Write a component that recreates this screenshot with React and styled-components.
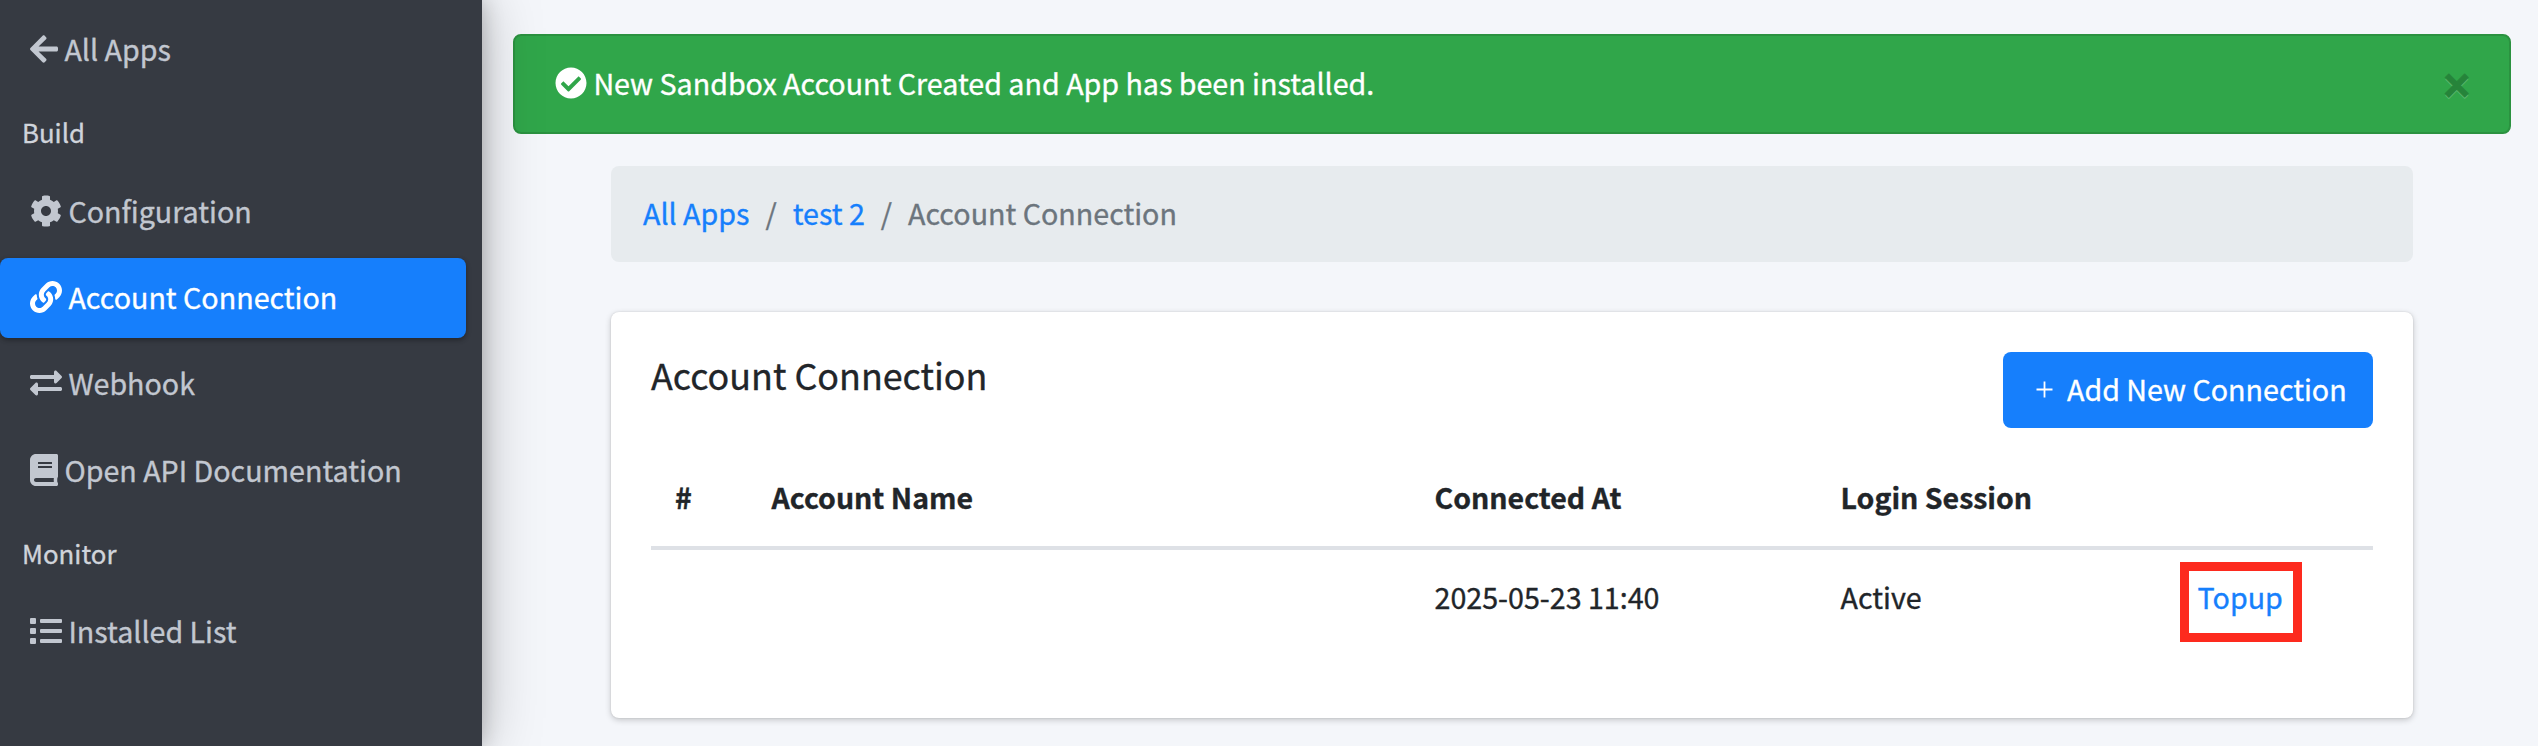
import React from "react";
import styled, { createGlobalStyle, css } from "styled-components";
import {
  FaArrowLeft,
  FaBook,
  FaCheckCircle,
  FaCog,
  FaExchangeAlt,
  FaLink,
  FaList,
} from "react-icons/fa";

const GlobalStyle = createGlobalStyle`
  *, *::before, *::after { box-sizing: border-box; }
  body {
    margin: 0;
    background: #f4f6fa;
    color: #212529;
    font-family: "Noto Sans CJK SC", "Noto Sans", sans-serif;
    font-size: 28.65px;
    line-height: 48px;
    -webkit-text-stroke: 0.35px currentColor;
    overflow: hidden;
  }
`;

const Page = styled.div`
  display: flex;
  height: 746px;
  overflow: hidden;
`;

const Sidebar = styled.aside`
  flex: none;
  width: 482px;
  height: 746px;
  padding: 10px 16px 0 0;
  background: #363a42;
  box-shadow: 0 0 56px rgba(0, 0, 0, 0.25), 0 0 20px rgba(0, 0, 0, 0.22);
  z-index: 1;
`;

const NavLink = styled.a`
  display: flex;
  align-items: center;
  gap: 6.4px;
  height: 80px;
  margin-bottom: 6.4px;
  padding: 0 30px 2px;
  border-radius: 8px;
  color: #c2c7d0;
  white-space: nowrap;
  ${(p) =>
    p.$active &&
    css`
      background: #167ffc;
      color: #fff;
      box-shadow: 0 2px 6px rgba(0, 0, 0, 0.12), 0 2px 4px rgba(0, 0, 0, 0.24);
    `}
  svg {
    flex: none;
    height: 32px;
    width: ${(p) => p.$iconWidth || 32}px;
  }
`;

const NavHeader = styled.div`
  height: 75.2px;
  padding: 13.5px 22px 0;
  color: #d0d4db;
  font-size: 25.8px;
  line-height: 43px;
`;

const Content = styled.main`
  flex: 1;
  min-width: 0;
  padding: 34px 27px 0 31px;
`;

const Alert = styled.div`
  display: flex;
  align-items: center;
  height: 100px;
  padding: 0 40px 2px 40px;
  background: #30a64a;
  border: 2px solid #2b9240;
  border-radius: 8px;
  color: #fff;
  svg {
    width: 32px;
    height: 32px;
    margin-right: 6.4px;
  }
`;

const CloseButton = styled.button`
  margin: 0 -1px 0 auto;
  padding: 3px 0 0;
  border: 0;
  background: none;
  color: #000;
  font: 700 46px / 48px "Liberation Sans", Arial, sans-serif;
  -webkit-text-stroke: 1px #000;
  text-shadow: 0 2px 0 #fff;
  opacity: 0.2;
`;

const Container = styled.div`
  padding: 32px 98px 0;
`;

const Breadcrumb = styled.nav`
  display: flex;
  height: 96px;
  padding: 23px 32px;
  background: #e7ebee;
  border-radius: 8px;
  color: #6c757d;
`;

const Separator = styled.span`
  padding: 0 16px;
`;

const Link = styled.a`
  color: #167ffc;
`;

const Card = styled.section`
  height: 406px;
  margin-top: 50px;
  padding: 40px;
  background: #fff;
  border-radius: 8px;
  box-shadow: 0 0 2px rgba(0, 0, 0, 0.125), 0 2px 6px rgba(0, 0, 0, 0.2);
`;

const CardHeader = styled.div`
  display: flex;
  justify-content: space-between;
  margin-bottom: 22px;
`;

const Title = styled.h1`
  margin: 0;
  font-size: 35.85px;
  font-weight: 400;
  line-height: 44px;
`;

const AddButton = styled.button`
  display: flex;
  align-items: center;
  gap: 14px;
  width: 370px;
  height: 76px;
  padding: 0 0 2px 33px;
  border: 0;
  border-radius: 8px;
  background: #167ffc;
  color: #fff;
  font: inherit;
  white-space: nowrap;
  -webkit-text-stroke: inherit;
`;

const Row = styled.div`
  display: grid;
  grid-template-columns: 96.5px 663px 406px 357px 1fr;
  ${(p) =>
    p.$head &&
    css`
      border-bottom: 4px solid #dee1e6;
      font-size: 28.5px;
      font-weight: 700;
    `}
`;

const Cell = styled.div`
  height: 96px;
  padding: 23px 24px;
  white-space: nowrap;
`;

const Highlight = styled.span`
  position: absolute;
  left: -18px;
  top: -11px;
  width: 122px;
  height: 80px;
  border: 9px solid #fd2a1e;
`;

const Anchor = styled.div`
  position: relative;
`;

const PlusIcon = () => (
  <svg width="17" height="17" viewBox="0 0 17 17" fill="none" stroke="#fff" strokeWidth="1.8">
    <path d="M8.5 0.5v16M0.5 8.5h16" />
  </svg>
);

export default function App() {
  return (
    <>
      <GlobalStyle />
      <Page>
        <Sidebar>
          <NavLink $iconWidth={28}><FaArrowLeft />All Apps</NavLink>
          <NavHeader>Build</NavHeader>
          <NavLink><FaCog />Configuration</NavLink>
          <NavLink $active><FaLink />Account Connection</NavLink>
          <NavLink><FaExchangeAlt />Webhook</NavLink>
          <NavLink $iconWidth={28}><FaBook />Open API Documentation</NavLink>
          <NavHeader>Monitor</NavHeader>
          <NavLink><FaList />Installed List</NavLink>
        </Sidebar>
        <Content>
          <Alert>
            <FaCheckCircle />
            New Sandbox Account Created and App has been installed.
            <CloseButton aria-label="Close">×</CloseButton>
          </Alert>
          <Container>
            <Breadcrumb>
              <Link>All Apps</Link>
              <Separator>/</Separator>
              <Link>test 2</Link>
              <Separator>/</Separator>
              <span>Account Connection</span>
            </Breadcrumb>
            <Card>
              <CardHeader>
                <Title>Account Connection</Title>
                <AddButton><PlusIcon />Add New Connection</AddButton>
              </CardHeader>
              <Row $head>
                <Cell>#</Cell>
                <Cell>Account Name</Cell>
                <Cell>Connected At</Cell>
                <Cell>Login Session</Cell>
                <Cell />
              </Row>
              <Row>
                <Cell />
                <Cell />
                <Cell>2025-05-23 11:40</Cell>
                <Cell>Active</Cell>
                <Cell>
                  <Anchor>
                    <Link>Topup</Link>
                    <Highlight />
                  </Anchor>
                </Cell>
              </Row>
            </Card>
          </Container>
        </Content>
      </Page>
    </>
  );
}
